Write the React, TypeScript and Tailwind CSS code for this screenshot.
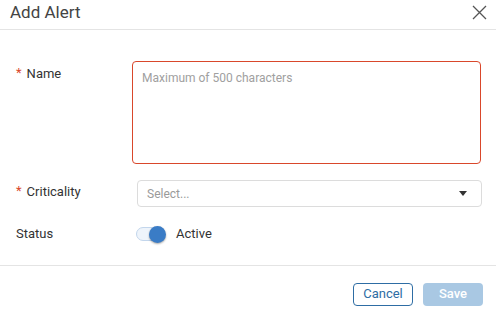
import React from 'react';

const Req = () => <span className="text-[#d9472b] mr-[5px] text-[13px] relative top-[-1px]">*</span>;

const App = (): React.JSX.Element => {
  return (
    <div className="w-[496px] h-[322px] bg-white text-[#333] font-['Roboto','Liberation_Sans',sans-serif]">
      <div className="h-[30px] flex items-center justify-between pl-[10px] pr-[9px] border-b border-[#e4e4e4]">
        <span className="text-[17px] text-[#444] leading-none relative top-[-2px]">Add Alert</span>
        <svg width="15" height="15" viewBox="0 0 15 15" className="relative top-[-2px]">
          <path d="M1 1 L14 14 M14 1 L1 14" stroke="#555" strokeWidth="1.3" fill="none" />
        </svg>
      </div>

      <div className="pt-[31px] pl-[16px] pr-[14px] text-[13px]">
        <div className="flex">
          <div className="w-[116px] pt-[3px] flex items-center h-[22px]">
            <Req />
            <span>Name</span>
          </div>
          <textarea
            placeholder="Maximum of 500 characters"
            className="w-[349px] h-[103px] border border-[#d9472b] rounded-[4px] px-[9px] py-[7px] text-[12px] placeholder:text-[#a0a0a0] resize-none outline-none"
          />
        </div>

        <div className="flex items-center mt-[16px]">
          <div className="w-[121px] flex items-center relative top-[-2px]">
            <Req />
            <span>Criticality</span>
          </div>
          <div className="w-[345px] h-[27px] border border-[#dcdcdc] rounded-[4px] flex items-center justify-between pl-[9px] pr-[14px]">
            <span className="text-[12px] text-[#9a9a9a]">Select...</span>
            <svg width="8" height="5" viewBox="0 0 8 5">
              <path d="M0 0 L8 0 L4 5 Z" fill="#333" />
            </svg>
          </div>
        </div>

        <div className="flex items-center mt-[17px]">
          <div className="w-[120px]">Status</div>
          <div className="relative w-[31px] h-[16px] flex items-center">
            <div className="w-[27px] h-[14px] rounded-full bg-[#eef4fb] border border-[#c3d6ec]" />
            <div className="absolute left-[13px] top-[0px] w-[17px] h-[17px] rounded-full bg-[#3a7cc6] shadow-[0_1px_2px_rgba(0,0,0,0.35)]" />
          </div>
          <span className="ml-[9px]">Active</span>
        </div>
      </div>

      <div className="mt-[21px] border-t border-[#e4e4e4] flex justify-end gap-[10px] pt-[17px] pr-[13px]">
        <button className="w-[60px] h-[23px] border border-[#2e6da4] rounded-[4px] text-[#2e6da4] text-[13px] bg-white">Cancel</button>
        <button className="w-[60px] h-[23px] rounded-[4px] bg-[#a9c8e3] text-white text-[13px] font-medium">Save</button>
      </div>
    </div>
  );
};

export default App;
